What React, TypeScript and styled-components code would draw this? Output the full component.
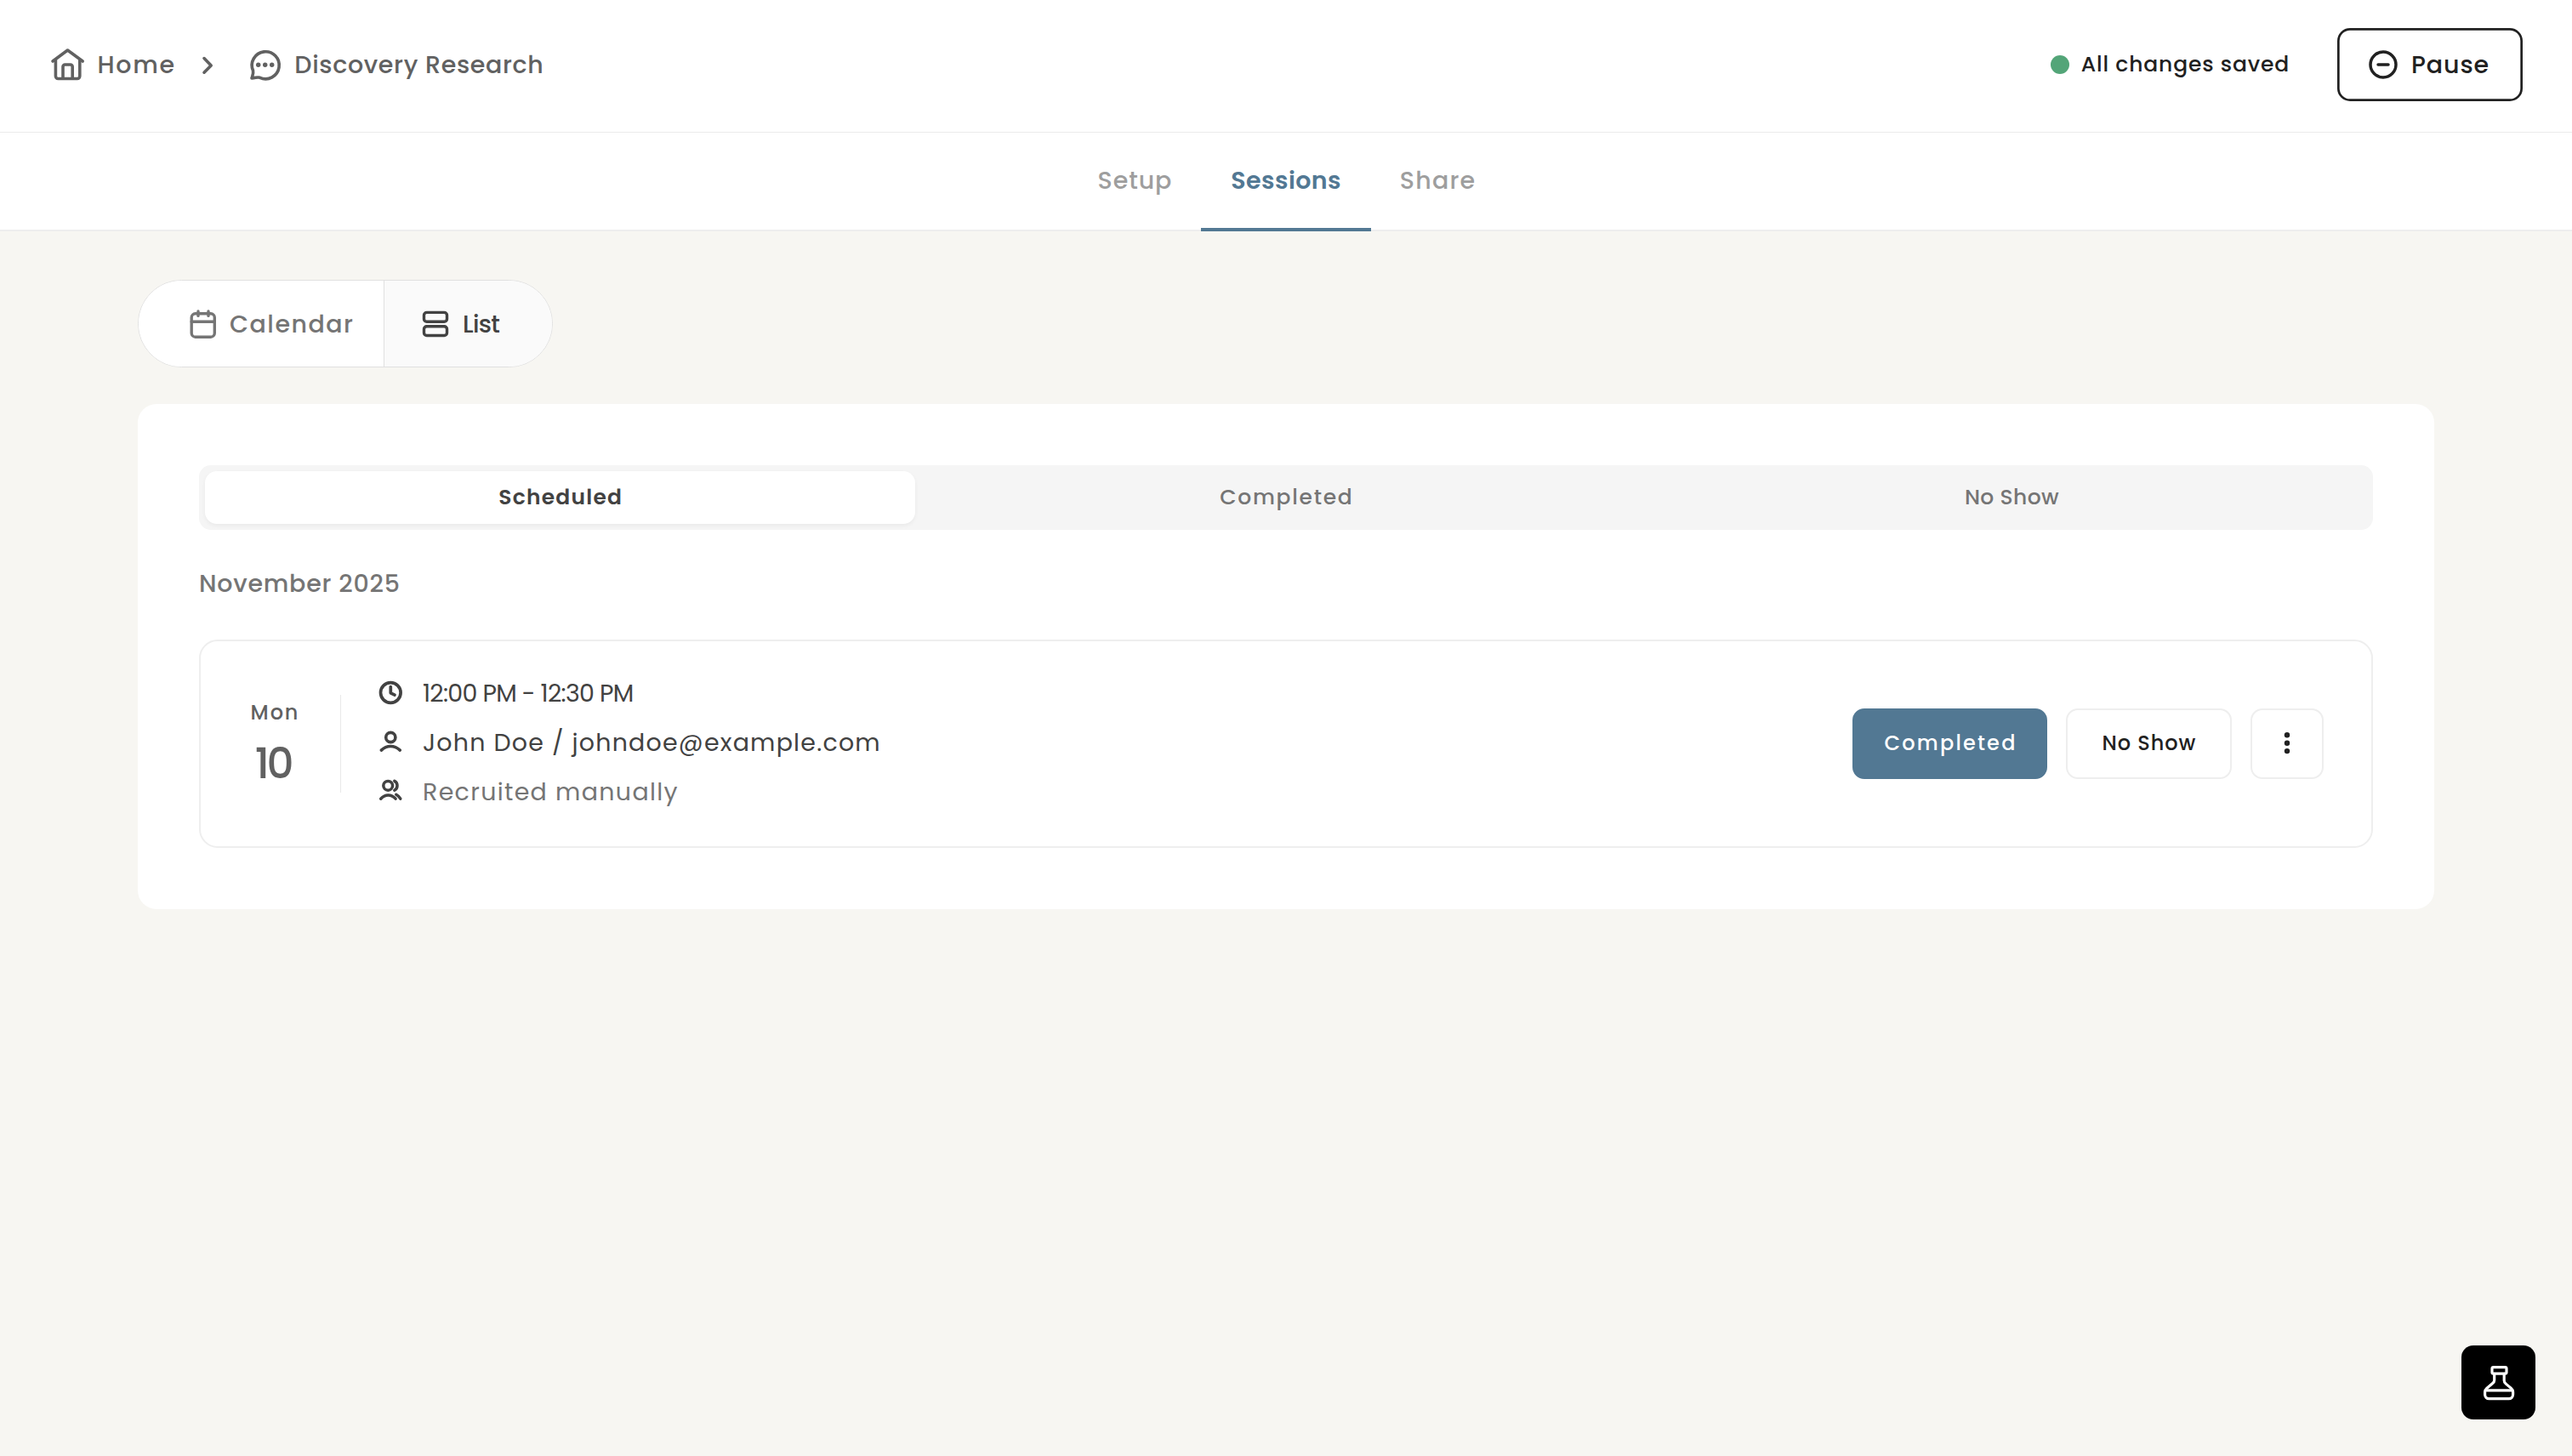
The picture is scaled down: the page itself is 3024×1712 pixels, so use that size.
import React from "react";
import styled, { createGlobalStyle } from "styled-components";

const GlobalStyle = createGlobalStyle`
  *, *::before, *::after { box-sizing: border-box; }
  body {
    margin: 0;
    background: #f7f6f2;
    font-family: Poppins, Inter, "Open Sans", sans-serif;
    font-feature-settings: "cv11";
  }
  button { font: inherit; color: inherit; font-feature-settings: inherit; margin: 0; padding: 0; border: 0; background: none; cursor: pointer; }
`;

const Page = styled.div`
  min-height: 1712px;
  display: flex;
  flex-direction: column;
`;

const Label = styled.span<{ $size?: number; $weight?: number; $track?: number; $width?: number }>`
  display: block;
  flex: none;
  white-space: nowrap;
  width: ${(p) => (p.$width ? `${p.$width}px` : "auto")};
  font-size: ${(p) => p.$size ?? 28.5}px;
  font-weight: ${(p) => p.$weight ?? 500};
  letter-spacing: ${(p) => p.$track ?? 0}px;
  margin-right: ${(p) => -(p.$track ?? 0)}px;
  line-height: 40px;
`;

const Icon = styled.svg<{ $stroke?: number }>`
  display: block;
  flex: none;
  fill: none;
  stroke: currentColor;
  stroke-width: ${(p) => p.$stroke ?? 3.4}px;
  stroke-linecap: round;
  stroke-linejoin: round;
  overflow: visible;
`;

const Header = styled.header`
  height: 156px;
  padding: 0 58px 3px 60px;
  display: flex;
  align-items: center;
  justify-content: space-between;
  background: #fff;
  border-bottom: 1px solid #ebebeb;
`;

const Crumbs = styled.nav`
  display: flex;
  align-items: center;
  color: #616161;
`;

const Crumb = styled.a<{ $gap: number }>`
  display: flex;
  align-items: center;
  gap: ${(p) => p.$gap}px;
`;

const Separator = styled.span`
  display: flex;
  padding: 2px 38px 0 32px;
`;

const HeaderActions = styled.div`
  display: flex;
  align-items: center;
  color: #212121;
`;

const StatusDot = styled.span`
  width: 22px;
  height: 22px;
  margin-right: 14px;
  border-radius: 50%;
  background: #53a578;
`;

const PauseButton = styled.button`
  width: 218px;
  height: 86px;
  margin-left: 70px;
  padding-left: 36px;
  display: flex;
  align-items: center;
  gap: 15px;
  border-radius: 15px;
  box-shadow: inset 0 0 0 2.7px #212121;
`;

const TabBar = styled.div`
  height: 116px;
  display: flex;
  justify-content: center;
  background: #fff;
  border-bottom: 2px solid #eeeeee;
`;

const Tab = styled.button<{ $active?: boolean; $width: number }>`
  width: ${(p) => p.$width}px;
  height: 116px;
  padding-bottom: ${(p) => (p.$active ? 0 : 4)}px;
  display: flex;
  align-items: center;
  justify-content: center;
  color: ${(p) => (p.$active ? "#527893" : "#9e9e9e")};
  border-bottom: ${(p) => (p.$active ? "4px solid #527893" : "0")};
`;

const Main = styled.main`
  padding: 57px 162px 0;
  display: flex;
  flex-direction: column;
  align-items: stretch;
`;

const ViewSwitch = styled.div`
  width: 488px;
  height: 103px;
  display: flex;
  border: 1px solid #e0e0e0;
  border-radius: 52px;
  background: #fff;
  overflow: hidden;
`;

const ViewOption = styled.button<{ $active?: boolean }>`
  display: flex;
  align-items: center;
  flex: ${(p) => (p.$active ? "1" : "0 0 288px")};
  gap: ${(p) => (p.$active ? 15 : 14)}px;
  padding-left: ${(p) => (p.$active ? 43 : 59)}px;
  color: ${(p) => (p.$active ? "#424242" : "#757575")};
  background: ${(p) => (p.$active ? "#fafafa" : "#fff")};
  border-left: ${(p) => (p.$active ? "1px solid #e0e0e0" : "0")};
`;

const Card = styled.section`
  margin-top: 43px;
  height: 594px;
  padding: 72px;
  border-radius: 22px;
  background: #fff;
`;

const StatusTabs = styled.div`
  height: 76px;
  padding: 7px;
  display: grid;
  grid-template-columns: repeat(3, 1fr);
  column-gap: 18px;
  border-radius: 14px;
  background: #f5f5f5;
`;

const StatusTab = styled.button<{ $active?: boolean }>`
  display: flex;
  align-items: center;
  justify-content: center;
  border-radius: 14px;
  color: ${(p) => (p.$active ? "#424242" : "#757575")};
  background: ${(p) => (p.$active ? "#fff" : "transparent")};
  box-shadow: ${(p) => (p.$active ? "0 2px 5px rgba(0, 0, 0, 0.05)" : "none")};
`;

const MonthHeading = styled.h2`
  margin: 43px 0 46px;
  height: 40px;
  font-weight: 500;
  color: #757575;
`;

const SessionRow = styled.article`
  height: 245px;
  padding-right: 56px;
  display: flex;
  align-items: center;
  border: 2px solid #eeeeee;
  border-radius: 22px;
`;

const DateBlock = styled.div`
  width: 165px;
  height: 115px;
  padding: 1px 0 0 9px;
  display: flex;
  flex-direction: column;
  align-items: center;
  gap: 20px;
  color: #616161;
  border-right: 1px solid #e9e9e9;
`;

const Details = styled.ul`
  flex: 1;
  margin: 0;
  padding: 0 0 4px 43px;
  display: flex;
  flex-direction: column;
  gap: 18px;
  list-style: none;
`;

const Detail = styled.li<{ $muted?: boolean }>`
  height: 40px;
  display: flex;
  align-items: center;
  gap: 22px;
  color: #424242;

  ${Label} { color: ${(p) => (p.$muted ? "#757575" : "#424242")}; }
`;

const Actions = styled.div`
  display: flex;
  gap: 22px;
`;

const ActionButton = styled.button<{ $primary?: boolean; $width: number }>`
  width: ${(p) => p.$width}px;
  height: 83px;
  padding-bottom: 1px;
  display: flex;
  align-items: center;
  justify-content: center;
  border-radius: 14px;
  border: 2px solid ${(p) => (p.$primary ? "#527893" : "#eeeeee")};
  background: ${(p) => (p.$primary ? "#527893" : "#fff")};
  color: ${(p) => (p.$primary ? "#fff" : "#212121")};
`;

const LabButton = styled.button`
  position: fixed;
  right: 43px;
  bottom: 43px;
  width: 87px;
  height: 87px;
  display: flex;
  align-items: center;
  justify-content: center;
  border-radius: 14px;
  color: #fff;
  background: #000;
`;

const HomeIcon = () => (
  <Icon width="40" height="40" viewBox="0 0 40 40" $stroke={3.6}>
    <path d="M2 16 19.5 3 37.2 16" />
    <path d="M5.4 14v19.5a3 3 0 0 0 3 3h22.4a3 3 0 0 0 3-3V14" />
    <path d="M14 36V22.4a2.4 2.4 0 0 1 2.4-2.4h6.4a2.4 2.4 0 0 1 2.4 2.4V36" />
  </Icon>
);

const ChevronIcon = () => (
  <Icon width="24" height="24" viewBox="0 0 24 24" $stroke={3.6}>
    <path d="m8 3.6 8.2 8.3L8 20.2" />
  </Icon>
);

const ChatIcon = () => (
  <Icon width="36" height="38" viewBox="0 0 36 38" $stroke={3.6}>
    <path d="M3.5 26A16 16 0 1 1 11.6 34.3C8.8 33.4 7 34.6 2 34.9 3.1 31.6 4.3 29.4 3.5 26Z" />
    <g fill="currentColor" stroke="none">
      <circle cx="9.7" cy="19.3" r="2.7" />
      <circle cx="17.7" cy="19.3" r="2.7" />
      <circle cx="25.7" cy="19.3" r="2.7" />
    </g>
  </Icon>
);

const MinusCircleIcon = () => (
  <Icon width="36" height="36" viewBox="0 0 36 36" $stroke={3.5}>
    <circle cx="18" cy="18" r="15" />
    <path d="M12 18h12" />
  </Icon>
);

const CalendarIcon = () => (
  <Icon width="34" height="36" viewBox="0 0 34 36">
    <rect x="3.2" y="5.8" width="27.1" height="27.4" rx="4.5" />
    <path d="M3.2 15.2h27.1M11 3v5.4M23 3v5.4" />
  </Icon>
);

const ListIcon = () => (
  <Icon width="34" height="34" viewBox="0 0 34 34">
    <rect x="3.5" y="3.4" width="27" height="10.8" rx="3.2" />
    <rect x="3.5" y="19.7" width="27" height="10.8" rx="3.2" />
  </Icon>
);

const ClockIcon = () => (
  <Icon width="31" height="31" viewBox="0 0 31 31" $stroke={3.7}>
    <circle cx="15.3" cy="15.5" r="11.8" />
    <path d="M15.3 8.7v7.1l4.7 2.4" />
  </Icon>
);

const PersonIcon = () => (
  <Icon width="31" height="31" viewBox="0 0 31 31" $stroke={3.6}>
    <circle cx="15.3" cy="10" r="5.6" />
    <path d="M4.3 25.1c6.4-6.2 15.4-6.2 22 0" />
  </Icon>
);

const PeopleIcon = () => (
  <Icon width="31" height="31" viewBox="0 0 31 31" $stroke={3.5}>
    <circle cx="12.2" cy="8.8" r="5.4" />
    <path d="M3.7 24.2c5-5.4 12.4-5.6 17.4 0" />
    <path d="M19.8 3.4c4.3 2.2 4.3 8.6 0 10.8M21.8 19.3c1.9 1 3.6 2.6 5 4.9" />
  </Icon>
);

const MoreIcon = () => (
  <Icon width="10" height="30" viewBox="0 0 10 30">
    <g fill="currentColor" stroke="none">
      <circle cx="5" cy="5.3" r="3.2" />
      <circle cx="5" cy="14.7" r="3.2" />
      <circle cx="5" cy="24.1" r="3.2" />
    </g>
  </Icon>
);

const FlaskIcon = () => (
  <Icon width="40" height="44" viewBox="0 0 40 44" $stroke={3.2}>
    <rect x="12" y="3.6" width="17" height="7.6" rx="1.6" />
    <path d="M14.7 11.4v7.4c0 1.6-.7 2.8-2 3.8l-7 5.8c-1.4 1.2-2.1 2.4-2.1 4.2v3.2a4.9 4.9 0 0 0 4.9 4.9h23.2a4.9 4.9 0 0 0 4.9-4.9v-3.2c0-1.8-.7-3-2.1-4.2l-6.3-5.3c-1.3-1-2-2.4-2-4.2v-7.5" />
    <path d="M5.6 30.8h29" />
  </Icon>
);

export default function App() {
  return (
    <Page>
      <GlobalStyle />
      <Header>
        <Crumbs>
          <Crumb $gap={14.5}>
            <HomeIcon />
            <Label $track={1.7} $width={87.5}>Home</Label>
          </Crumb>
          <Separator>
            <ChevronIcon />
          </Separator>
          <Crumb $gap={16}>
            <ChatIcon />
            <Label $track={0.65}>Discovery Research</Label>
          </Crumb>
        </Crumbs>
        <HeaderActions>
          <StatusDot />
          <Label $size={25} $track={0.85} $width={232}>All changes saved</Label>
          <PauseButton>
            <MinusCircleIcon />
            <Label $track={0.9}>Pause</Label>
          </PauseButton>
        </HeaderActions>
      </Header>

      <TabBar>
        <Tab $width={156}><Label $track={0.9}>Setup</Label></Tab>
        <Tab $active $width={200}><Label $weight={600} $track={0.4}>Sessions</Label></Tab>
        <Tab $width={156}><Label $track={1.2}>Share</Label></Tab>
      </TabBar>

      <Main>
        <ViewSwitch>
          <ViewOption>
            <CalendarIcon />
            <Label $track={1.5}>Calendar</Label>
          </ViewOption>
          <ViewOption $active>
            <ListIcon />
            <Label $track={-0.7}>List</Label>
          </ViewOption>
        </ViewSwitch>

        <Card>
          <StatusTabs>
            <StatusTab $active><Label $size={25} $weight={600} $track={1.2}>Scheduled</Label></StatusTab>
            <StatusTab><Label $size={25} $track={1.7}>Completed</Label></StatusTab>
            <StatusTab><Label $size={25} $track={0.4}>No Show</Label></StatusTab>
          </StatusTabs>

          <MonthHeading><Label $track={0.75}>November 2025</Label></MonthHeading>

          <SessionRow>
            <DateBlock>
              <Label $size={24} $track={1.9}>Mon</Label>
              <Label $size={50} $track={-3.5}>10</Label>
            </DateBlock>
            <Details>
              <Detail>
                <ClockIcon />
                <Label $weight={400} $track={-0.76}>12:00 PM - 12:30 PM</Label>
              </Detail>
              <Detail>
                <PersonIcon />
                <Label $weight={400} $track={1.2}>John Doe / johndoe@example.com</Label>
              </Detail>
              <Detail $muted>
                <PeopleIcon />
                <Label $weight={400} $track={1.3}>Recruited manually</Label>
              </Detail>
            </Details>
            <Actions>
              <ActionButton $primary $width={229}><Label $size={24} $track={2.2}>Completed</Label></ActionButton>
              <ActionButton $width={195}><Label $size={24} $track={0.95}>No Show</Label></ActionButton>
              <ActionButton $width={86} aria-label="More"><MoreIcon /></ActionButton>
            </Actions>
          </SessionRow>
        </Card>
      </Main>

      <LabButton aria-label="Lab">
        <FlaskIcon />
      </LabButton>
    </Page>
  );
}
